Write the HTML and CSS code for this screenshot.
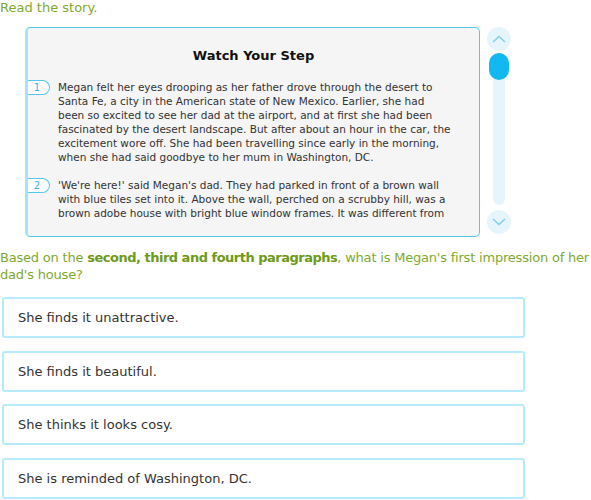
FILE: index.html
```html
<!DOCTYPE html>
<html lang="en">
<head>
    <meta charset="UTF-8">
    <meta name="viewport" content="width=device-width, initial-scale=1.0">
    <title>Watch Your Step</title>
    <link rel="stylesheet" href="styles.css">
</head>
<body>

<p class="instruction">Read the story.</p>

<div class="story-wrap">
    <div class="story">
        <div class="story-body">
            <h2 class="story-title">Watch Your Step</h2>

            <!-- Paragraph 1 -->
            <div class="para">
                <span class="para-num">1</span>
                <p>Megan felt her eyes drooping as her father drove through the desert to Santa Fe, a city in the American state of New Mexico. Earlier, she had been so excited to see her dad at the airport, and at first she had been fascinated by the desert landscape. But after about an hour in the car, the excitement wore off. She had been travelling since early in the morning, when she had said goodbye to her mum in Washington, DC.</p>
            </div>

            <!-- Paragraph 2 -->
            <div class="para">
                <span class="para-num">2</span>
                <p>'We're here!' said Megan's dad. They had parked in front of a brown wall with blue tiles set into it. Above the wall, perched on a scrubby hill, was a brown adobe house with bright blue window frames. It was different from any house Megan had seen before.</p>
            </div>
        </div>
    </div>

    <div class="scroller">
        <button class="scroll-btn" type="button">
            <svg width="14" height="8" viewBox="0 0 14 8"><path d="M1 7 L7 1.5 L13 7" fill="none" stroke="#7fcdef" stroke-width="1.4"/></svg>
        </button>
        <div class="track">
            <div class="thumb"></div>
        </div>
        <button class="scroll-btn" type="button">
            <svg width="14" height="8" viewBox="0 0 14 8"><path d="M1 1 L7 6.5 L13 1" fill="none" stroke="#7fcdef" stroke-width="1.4"/></svg>
        </button>
    </div>
</div>

<p class="question">Based on the <strong>second, third and fourth paragraphs</strong>, what is Megan's first impression of her dad's house?</p>

<div class="answers">
    <div class="answer">She finds it unattractive.</div>
    <div class="answer">She finds it beautiful.</div>
    <div class="answer">She thinks it looks cosy.</div>
    <div class="answer">She is reminded of Washington, DC.</div>
</div>

</body>
</html>
```

FILE: styles.css
```css
body {
    margin: 0;
    font-family: "DejaVu Sans", Verdana, sans-serif;
    background-color: white;
    color: #333;
}
.instruction {
    margin: 0;
    font-size: 13px;
    line-height: 15px;
    color: #7fa82f;
}
.story-wrap {
    display: flex;
    margin: 12px 0 0 25px;
}
.story {
    width: 451px;
    height: 208px;
    background-color: #f5f5f5;
    border: 1px solid #55c6ec;
    border-left: 3px solid #a3e4fa;
    border-radius: 5px;
}
/* visible part of the scrolling text */
.story-body {
    height: 193px;
    overflow: hidden;
}
.story-title {
    margin: 20px 0 16px;
    font-size: 13px;
    line-height: 16px;
    text-align: center;
    color: #111;
}
.para {
    display: flex;
    align-items: flex-start;
    margin-bottom: 14px;
}
.para-num {
    flex: none;
    width: 24px;
    height: 13px;
    margin: 0 8px 0 -3px;
    border: 1px solid #55c6ec;
    border-left: none;
    border-radius: 0 8px 8px 0;
    background-color: white;
    color: #3ab4e6;
    font-size: 10px;
    line-height: 13px;
    text-align: center;
}
.para p {
    margin: 0;
    padding-right: 26px;
    font-size: 10.5px;
    line-height: 14px;
    color: #333;
}
.scroller {
    display: flex;
    flex-direction: column;
    align-items: center;
    width: 24px;
    margin-left: 7px;
}
.scroll-btn {
    display: flex;
    align-items: center;
    justify-content: center;
    width: 24px;
    height: 24px;
    padding: 0;
    border: none;
    border-radius: 50%;
    background-color: #e6f5fb;
}
.track {
    width: 12px;
    height: 151px;
    margin: 3px 0 5px;
    border-radius: 6px;
    background-color: #e6f5fb;
    display: flex;
    justify-content: center;
}
.thumb {
    flex: none;
    width: 20px;
    height: 27px;
    margin-top: -1px;
    border-radius: 10px;
    background-color: #12b9f0;
}
.question {
    margin: 12px 0 14px;
    font-size: 13px;
    line-height: 17px;
    letter-spacing: -0.2px;
    color: #7fa82f;
}
.question strong {
    color: #6e9a1a;
    letter-spacing: -0.5px;
}
.answers {
    display: flex;
    flex-direction: column;
    gap: 12.5px;
    width: 523px;
    margin-left: 2px;
}
.answer {
    height: 37px;
    padding-left: 14px;
    border: 2px solid #b5ebfc;
    border-radius: 3px;
    font-size: 13px;
    line-height: 37px;
    color: #333;
}
```
